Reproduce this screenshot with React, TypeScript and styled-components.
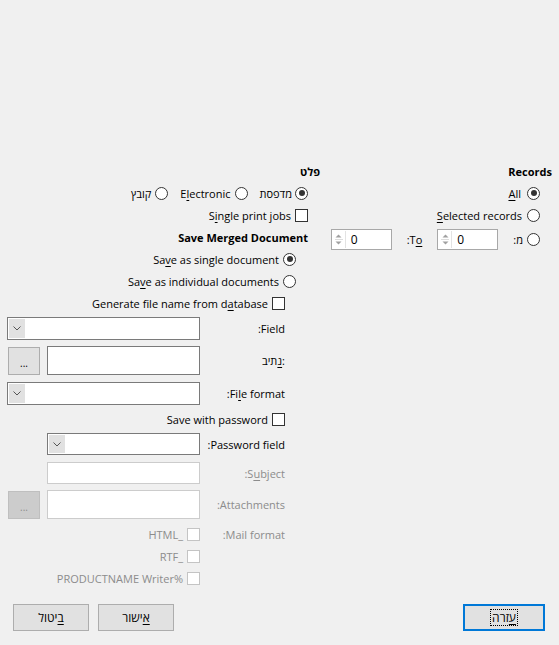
import React from "react";
import styled, { createGlobalStyle } from "styled-components";

const GlobalStyle = createGlobalStyle`
	html, body {
		margin: 0;
		padding: 0;
		background: #f0f0f0;
	}
	body {
		font-family: "Open Sans", "Noto Sans", "Liberation Sans", sans-serif;
		font-size: 11px;
		color: #000;
	}
`;

const Dialog = styled.div`
	direction: rtl;
	width: 559px;
	height: 645px;
	display: flex;
	flex-direction: column;
	background: #f0f0f0;
	box-sizing: border-box;
`;

const Content = styled.div`
	flex: 1;
	display: flex;
	gap: 10px;
	padding: 160px 7px 0 7px;
`;

const Column = styled.div<{ $w: number }>`
	width: ${(p) => p.$w}px;
	display: flex;
	flex-direction: column;
`;

const Row = styled.div<{ $h?: number; $indent?: number; $mt?: number; $gap?: number }>`
	display: flex;
	align-items: center;
	height: ${(p) => p.$h ?? 22}px;
	margin-top: ${(p) => p.$mt ?? 0}px;
	padding-right: ${(p) => p.$indent ?? 0}px;
	gap: ${(p) => p.$gap ?? 0}px;
	flex-shrink: 0;
`;

const Heading = styled.span`
	font-weight: 700;
	direction: ltr;
	unicode-bidi: isolate;
`;

const Txt = styled.span<{ $muted?: boolean }>`
	direction: ltr;
	unicode-bidi: isolate;
	white-space: nowrap;
	color: ${(p) => (p.$muted ? "#8c8c8c" : "#000")};
`;

const HebLabel = styled.span`
	display: inline-flex;
	direction: ltr;
	white-space: nowrap;
`;

const HebWord = styled.span`
	direction: rtl;
	unicode-bidi: isolate;
`;

const U = styled.u`
	text-decoration: underline;
	text-underline-offset: 2px;
`;

const Option = styled.label<{ $gap?: number }>`
	display: flex;
	align-items: center;
	gap: ${(p) => p.$gap ?? 4}px;
`;

const Radio = styled.span<{ $on?: boolean }>`
	width: 11px;
	height: 11px;
	border: 1px solid #333;
	border-radius: 50%;
	background: #fff;
	display: flex;
	align-items: center;
	justify-content: center;
	flex-shrink: 0;
	&::after {
		content: "";
		width: 6px;
		height: 6px;
		border-radius: 50%;
		background: ${(p) => (p.$on ? "#333" : "transparent")};
	}
`;

const Check = styled.span<{ $disabled?: boolean }>`
	width: 11px;
	height: 11px;
	border: 1px solid ${(p) => (p.$disabled ? "#c4c4c4" : "#333")};
	background: #fff;
	flex-shrink: 0;
`;

const Spin = styled.div`
	width: 59px;
	height: 19px;
	border: 1px solid #a8a8a8;
	background: #fff;
	display: flex;
	direction: ltr;
	align-items: center;
`;

const SpinArrows = styled.div`
	width: 12px;
	height: 17px;
	margin-left: 1px;
	display: flex;
	flex-direction: column;
	align-items: center;
	justify-content: center;
	border-right: 1px solid #e3e3e3;
	gap: 1px;
`;

const SpinValue = styled.span`
	padding-left: 5px;
	font-size: 12px;
`;

const FieldLabel = styled.div<{ $muted?: boolean }>`
	width: 85px;
	flex-shrink: 0;
	display: flex;
	color: ${(p) => (p.$muted ? "#8c8c8c" : "#000")};
`;

const Controls = styled.div<{ $gap?: number }>`
	flex: 1;
	display: flex;
	align-items: center;
	gap: ${(p) => p.$gap ?? 7}px;
	height: 100%;
`;

const Combo = styled.div<{ $w: number }>`
	width: ${(p) => p.$w}px;
	height: 100%;
	box-sizing: border-box;
	border: 1px solid #7a7a7a;
	background: #fff;
	display: flex;
	justify-content: flex-end;
	padding: 1px;
`;

const ComboButton = styled.span`
	width: 16px;
	background: #e1e1e1;
	display: flex;
	align-items: center;
	justify-content: center;
`;

const Entry = styled.div<{ $w: number; $disabled?: boolean }>`
	width: ${(p) => p.$w}px;
	height: 100%;
	box-sizing: border-box;
	border: 1px solid ${(p) => (p.$disabled ? "#cccccc" : "#7a7a7a")};
	background: #fff;
`;

const Browse = styled.button<{ $disabled?: boolean }>`
	width: 32px;
	height: 28px;
	box-sizing: border-box;
	border: 1px solid ${(p) => (p.$disabled ? "#bfbfbf" : "#adadad")};
	background: ${(p) => (p.$disabled ? "#cccccc" : "#e1e1e1")};
	color: ${(p) => (p.$disabled ? "#8c8c8c" : "#000")};
	font: inherit;
	font-size: 10px;
	padding: 4px 0 0 0;
	display: flex;
	align-items: center;
	justify-content: center;
	direction: ltr;
`;

const Footer = styled.div`
	display: flex;
	align-items: center;
	padding: 0 14px 14px 13px;
	gap: 9px;
`;

const Spacer = styled.div`
	flex: 1;
`;

const DlgButton = styled.button<{ $focus?: boolean; $w: number }>`
	width: ${(p) => p.$w}px;
	height: 27px;
	box-sizing: border-box;
	border: ${(p) => (p.$focus ? "2px solid #0078d7" : "1px solid #adadad")};
	background: #e1e1e1;
	font: inherit;
	font-size: 12px;
	color: #000;
	display: flex;
	align-items: center;
	justify-content: center;
	padding: 0;
`;

const FocusRect = styled.span`
	border: 1px dotted #000;
	padding: 0 1px;
	line-height: 15px;
`;

const Chevron = () => (
	<svg width="8" height="5" viewBox="0 0 8 5">
		<path d="M0.5 0.5 L4 4 L7.5 0.5" fill="none" stroke="#555" strokeWidth="1" />
	</svg>
);

const SpinBox = ({ value }: { value: string }) => (
	<Spin>
		<SpinArrows>
			<svg width="7" height="4" viewBox="0 0 7 4">
				<path d="M0.5 3.5 L3.5 0.5 L6.5 3.5 Z" fill="#a0a0a0" />
			</svg>
			<svg width="8" height="1" viewBox="0 0 8 1">
				<rect width="8" height="1" fill="#dcdcdc" />
			</svg>
			<svg width="7" height="4" viewBox="0 0 7 4">
				<path d="M0.5 0.5 L3.5 3.5 L6.5 0.5 Z" fill="#a0a0a0" />
			</svg>
		</SpinArrows>
		<SpinValue>{value}</SpinValue>
	</Spin>
);

export default function App() {
	return (
		<>
			<GlobalStyle />
			<Dialog>
				<Content>
					<Column $w={222}>
						<Row>
							<Heading>Records</Heading>
						</Row>
						<Row $indent={12}>
							<Option $gap={6}>
								<Radio $on />
								<Txt>
									<U>A</U>ll
								</Txt>
							</Option>
						</Row>
						<Row $indent={12}>
							<Option $gap={5}>
								<Radio />
								<Txt>
									<U>S</U>elected records
								</Txt>
							</Option>
						</Row>
						<Row $indent={12} $h={26} $gap={15}>
							<Option>
								<Radio />
								<Txt>:מ</Txt>
							</Option>
							<SpinBox value="0" />
							<Txt>
								:T<U>o</U>
							</Txt>
							<SpinBox value="0" />
						</Row>
					</Column>

					<Column $w={313}>
						<Row>
							<Heading>פלט</Heading>
						</Row>
						<Row $indent={12} $gap={12}>
							<Option $gap={3}>
								<Radio $on />
								<Txt>מדפסת</Txt>
							</Option>
							<Option>
								<Radio />
								<Txt>
									E<U>l</U>ectronic
								</Txt>
							</Option>
							<Option>
								<Radio />
								<Txt>קובץ</Txt>
							</Option>
						</Row>
						<Row $indent={12}>
							<Option>
								<Check />
								<Txt>
									S<U>i</U>ngle print jobs
								</Txt>
							</Option>
						</Row>
						<Row $indent={12}>
							<Heading>Save Merged Document</Heading>
						</Row>
						<Row $indent={24}>
							<Option>
								<Radio $on />
								<Txt>
									Sa<U>v</U>e as single document
								</Txt>
							</Option>
						</Row>
						<Row $indent={24}>
							<Option>
								<Radio />
								<Txt>
									Sa<U>v</U>e as individual documents
								</Txt>
							</Option>
						</Row>
						<Row $indent={35}>
							<Option>
								<Check />
								<Txt>
									Generate file name from d<U>a</U>tabase
								</Txt>
							</Option>
						</Row>

						<Row $indent={35} $h={23} $mt={3}>
							<FieldLabel>
								<Txt>:Field</Txt>
							</FieldLabel>
							<Controls>
								<Combo $w={193}>
									<ComboButton>
										<Chevron />
									</ComboButton>
								</Combo>
							</Controls>
						</Row>
						<Row $indent={35} $h={29} $mt={6}>
							<FieldLabel>
								<HebLabel>
									<HebWord>
										<U>נ</U>תיב
									</HebWord>
									<span>:</span>
								</HebLabel>
							</FieldLabel>
							<Controls>
								<Entry $w={153} />
								<Browse>
									...<U> </U>
								</Browse>
							</Controls>
						</Row>
						<Row $indent={35} $h={23} $mt={7}>
							<FieldLabel>
								<Txt>
									:Fi<U>l</U>e format
								</Txt>
							</FieldLabel>
							<Controls>
								<Combo $w={193}>
									<ComboButton>
										<Chevron />
									</ComboButton>
								</Combo>
							</Controls>
						</Row>
						<Row $indent={35} $mt={3}>
							<Option>
								<Check />
								<Txt>Save with password</Txt>
							</Option>
						</Row>
						<Row $indent={35} $h={22} $mt={3}>
							<FieldLabel>
								<Txt>:Password field</Txt>
							</FieldLabel>
							<Controls>
								<Combo $w={153}>
									<ComboButton>
										<Chevron />
									</ComboButton>
								</Combo>
							</Controls>
						</Row>
						<Row $indent={35} $h={22} $mt={7}>
							<FieldLabel $muted>
								<Txt $muted>
									:S<U>u</U>bject
								</Txt>
							</FieldLabel>
							<Controls>
								<Entry $w={153} $disabled />
							</Controls>
						</Row>
						<Row $indent={35} $h={29} $mt={6}>
							<FieldLabel $muted>
								<Txt $muted>:Attachments</Txt>
							</FieldLabel>
							<Controls>
								<Entry $w={153} $disabled />
								<Browse $disabled>
									...<U> </U>
								</Browse>
							</Controls>
						</Row>
						<Row $indent={35} $mt={4}>
							<FieldLabel $muted>
								<Txt $muted>:Mail format</Txt>
							</FieldLabel>
							<Controls>
								<Option>
									<Check $disabled />
									<Txt $muted>HTML_</Txt>
								</Option>
							</Controls>
						</Row>
						<Row $indent={120}>
							<Option>
								<Check $disabled />
								<Txt $muted>RTF_</Txt>
							</Option>
						</Row>
						<Row $indent={120}>
							<Option>
								<Check $disabled />
								<Txt $muted>PRODUCTNAME Writer%</Txt>
							</Option>
						</Row>
					</Column>
				</Content>

				<Footer>
					<DlgButton $w={82} $focus>
						<FocusRect>
							<U>ע</U>זרה
						</FocusRect>
					</DlgButton>
					<Spacer />
					<DlgButton $w={76}>
						<U>א</U>ישור
					</DlgButton>
					<DlgButton $w={76}>
						<U>ב</U>יטול
					</DlgButton>
				</Footer>
			</Dialog>
		</>
	);
}
